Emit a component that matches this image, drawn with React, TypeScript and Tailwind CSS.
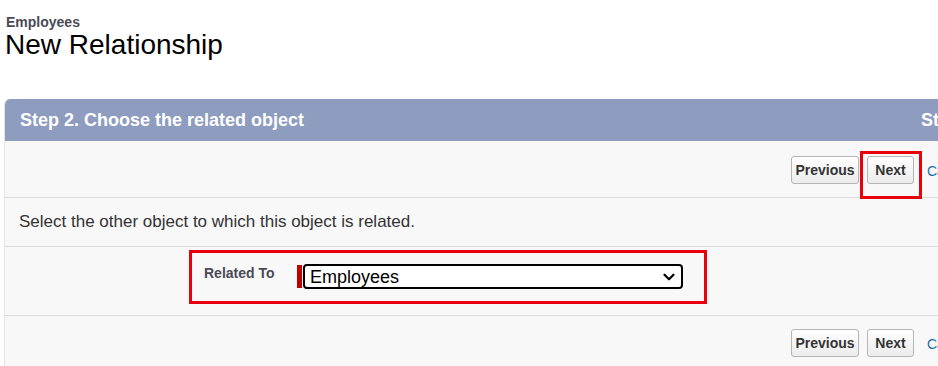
import { ChevronDown } from "lucide-react";

function WizButton({ label, wide }: { label: string; wide: string }) {
  return (
    <button
      className={`h-[28px] ${wide} rounded-[3px] border border-[#b5b5b5] bg-gradient-to-b from-white to-[#ececec] text-[14px] font-bold text-[#333] leading-none`}
    >
      {label}
    </button>
  );
}

function ButtonRow({ highlight }: { highlight?: boolean }) {
  return (
    <div className="flex items-start gap-[8px] pl-[786px]">
      <WizButton label="Previous" wide="w-[68px]" />
      <div className="relative">
        <WizButton label="Next" wide="w-[47px]" />
        {highlight && (
          <div className="absolute -left-[7px] -top-[5px] h-[48px] w-[62px] border-[3px] border-[#e8000b]" />
        )}
      </div>
      <a className="ml-[5px] mt-[5px] text-[14px] text-[#1b6ea8]">Cancel</a>
    </div>
  );
}

export default function App() {
  return (
    <div
      className="h-[366px] w-[938px] overflow-hidden bg-white text-[#333]"
      style={{ fontFamily: '"Liberation Sans", Arial, sans-serif' }}
    >
      <div className="pl-[6px] pt-[14px]">
        <div className="text-[14px] font-bold leading-[16px] text-[#4a4a56]">Employees</div>
        <h1 className="-ml-[1px] text-[28px] leading-[30px] text-black">New Relationship</h1>
      </div>

      <div className="ml-[4px] mt-[39px] w-[1016px] overflow-hidden rounded-tl-[6px] border-l border-[#e4e4e4] bg-[#f8f8f8]">
        <div className="flex h-[42px] items-center justify-between bg-[#8d9cbf] pl-[15px] pr-[8px] text-[18px] font-bold text-white">
          <span>Step 2. Choose the related object</span>
          <span>Step 2 of 3</span>
        </div>

        <div className="h-[57px] border-b border-[#dcdcdc] pt-[15px]">
          <ButtonRow highlight />
        </div>

        <div className="flex h-[49px] items-center border-b border-[#dcdcdc] pl-[14px] text-[17px] text-[#333]">
          Select the other object to which this object is related.
        </div>

        <div className="h-[69px] border-b border-[#dcdcdc] pt-[3px]">
          <div className="ml-[184px] flex h-[54px] w-[518px] items-start border-[3px] border-[#e8000b] pl-[12px] pt-[11px]">
            <div className="mt-[1px] w-[93px] text-[14px] font-bold leading-[16px] text-[#4a4a56]">Related To</div>
            <div className="mt-[1px] h-[23px] w-[5px] bg-[#c00000]" />
            <div className="ml-[1px] flex h-[25px] w-[380px] items-center justify-between rounded-[4px] border-2 border-black bg-white pl-[5px] pr-[3px]">
              <span className="text-[18px] leading-none text-black">Employees</span>
              <ChevronDown size={18} strokeWidth={3} className="text-black" />
            </div>
          </div>
        </div>

        <div className="h-[60px] pt-[13px]">
          <ButtonRow />
        </div>
      </div>
    </div>
  );
}
